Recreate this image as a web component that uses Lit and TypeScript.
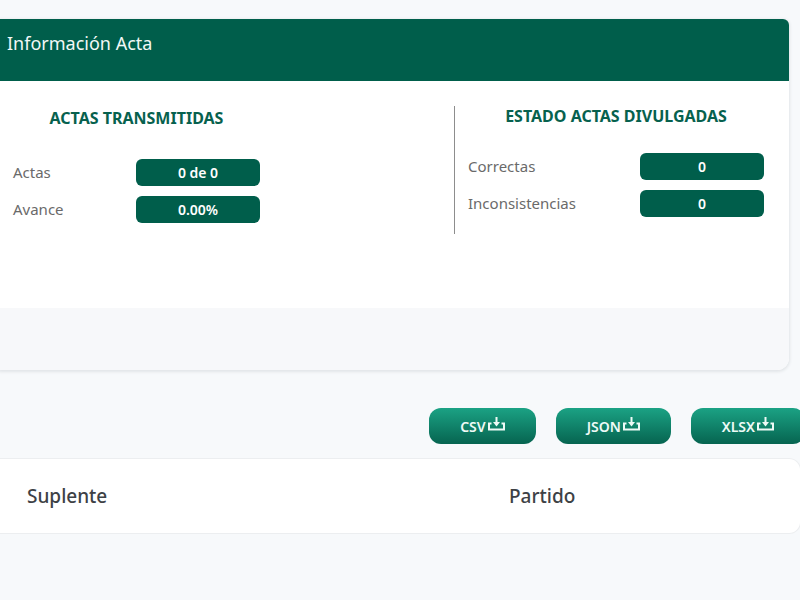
import { LitElement, html, css, svg } from "lit";
import { customElement, property } from "lit/decorators.js";

interface Stat {
  label: string;
  value: string;
}

@customElement("stat-group")
class StatGroup extends LitElement {
  static styles = css`
    :host {
      display: block;
    }
    .title {
      margin: 0 0 27px;
      color: #07614e;
      font-size: 16px;
      font-weight: 700;
      line-height: 20px;
      text-align: center;
    }
    :host([spaced]) .title {
      margin-bottom: 31px;
    }
    .list {
      display: grid;
      gap: 10px;
      margin: 0;
    }
    .row {
      display: grid;
      grid-template-columns: 1fr 124px;
      align-items: center;
    }
    .label {
      color: #6a6a6a;
      font-size: 15px;
      line-height: 27px;
    }
    .value {
      margin: 0;
      border-radius: 6px;
      background: #005e4b;
      color: #fff;
      font-size: 14px;
      font-weight: 600;
      line-height: 27px;
      text-align: center;
    }
  `;

  @property() heading = "";
  @property({ type: Boolean, reflect: true }) spaced = false;
  @property({ attribute: false }) stats: Stat[] = [];

  render() {
    return html`
      <h2 class="title">${this.heading}</h2>
      <dl class="list">
        ${this.stats.map(
          (s) => html`<div class="row">
            <dt class="label">${s.label}</dt>
            <dd class="value">${s.value}</dd>
          </div>`
        )}
      </dl>
    `;
  }
}

const downloadIcon = svg`
  <path d="M3.5 6.5H1V12.5H16V6.5H13.5" fill="none" stroke="currentColor" stroke-width="2"/>
  <path d="M8.5 0V6" stroke="currentColor" stroke-width="2"/>
  <path d="M5 5H12L8.5 9.5Z" fill="currentColor"/>
`;

@customElement("app-root")
class AppRoot extends LitElement {
  static styles = css`
    :host {
      display: block;
      box-sizing: border-box;
      min-height: 100vh;
      padding-top: 19px;
      overflow: hidden;
      background: #f7f9fb;
      font-family: "Noto Sans", sans-serif;
    }
    .card {
      margin-right: 11px;
      border-radius: 0 6px 12px 0;
      background: #fff;
      box-shadow: 0 1px 3px 1px #e2e5e8;
      overflow: hidden;
    }
    .card-head {
      padding: 12px 7px 26px;
      background: #005e4b;
      color: #f2f8f6;
    }
    .heading {
      margin: 0;
      font-size: 18px;
      font-weight: 400;
      line-height: 24px;
    }
    .card-body {
      display: grid;
      grid-template-columns: 454fr 335fr;
      padding: 25px 0 74px;
    }
    .sent {
      align-self: end;
      padding: 0 0 11px 13px;
    }
    .sent stat-group {
      width: 247px;
    }
    .published {
      padding: 0 25px 17px 13px;
      border-left: 1px solid #8d8d8d;
    }
    .card-foot {
      height: 62px;
      background: #f7f8fa;
    }
    .actions {
      display: flex;
      justify-content: flex-end;
      gap: 20px;
      margin: 38px -5px 14px 0;
    }
    .export {
      display: flex;
      align-items: center;
      gap: 2px;
      height: 36px;
      padding: 0 31px;
      border: 0;
      border-radius: 12px;
      background: linear-gradient(#1ba284, #066450);
      color: #eefaf6;
      font: 600 14px "Noto Sans", sans-serif;
      cursor: pointer;
    }
    .icon {
      width: 17px;
      height: 14px;
      margin-bottom: 4px;
    }
    .table-card {
      margin-right: -1px;
      border: 1px solid #eceef0;
      border-left: 0;
      border-radius: 0 12px 12px 0;
      background: #fff;
    }
    .table {
      width: 100%;
      table-layout: fixed;
      border-collapse: collapse;
    }
    .col {
      padding: 0 27px;
      height: 74px;
      color: #3d4145;
      font-size: 19px;
      font-weight: 500;
      text-align: left;
    }
    .col-first {
      width: 428px;
    }
  `;

  private sent: Stat[] = [
    { label: "Actas", value: "0 de 0" },
    { label: "Avance", value: "0.00%" },
  ];
  private published: Stat[] = [
    { label: "Correctas", value: "0" },
    { label: "Inconsistencias", value: "0" },
  ];

  render() {
    return html`
      <section class="card">
        <header class="card-head">
          <h1 class="heading">Información Acta</h1>
        </header>
        <div class="card-body">
          <div class="sent">
            <stat-group spaced heading="ACTAS TRANSMITIDAS" .stats=${this.sent}></stat-group>
          </div>
          <div class="published">
            <stat-group heading="ESTADO ACTAS DIVULGADAS" .stats=${this.published}></stat-group>
          </div>
        </div>
        <div class="card-foot"></div>
      </section>
      <div class="actions">
        ${["CSV", "JSON", "XLSX"].map(
          (f) => html`<button class="export" type="button">
            ${f}<svg class="icon" viewBox="0 0 17 14" aria-hidden="true">${downloadIcon}</svg>
          </button>`
        )}
      </div>
      <div class="table-card">
        <table class="table">
          <thead>
            <tr>
              <th class="col col-first" scope="col">Suplente</th>
              <th class="col" scope="col">Partido</th>
            </tr>
          </thead>
        </table>
      </div>
    `;
  }
}
